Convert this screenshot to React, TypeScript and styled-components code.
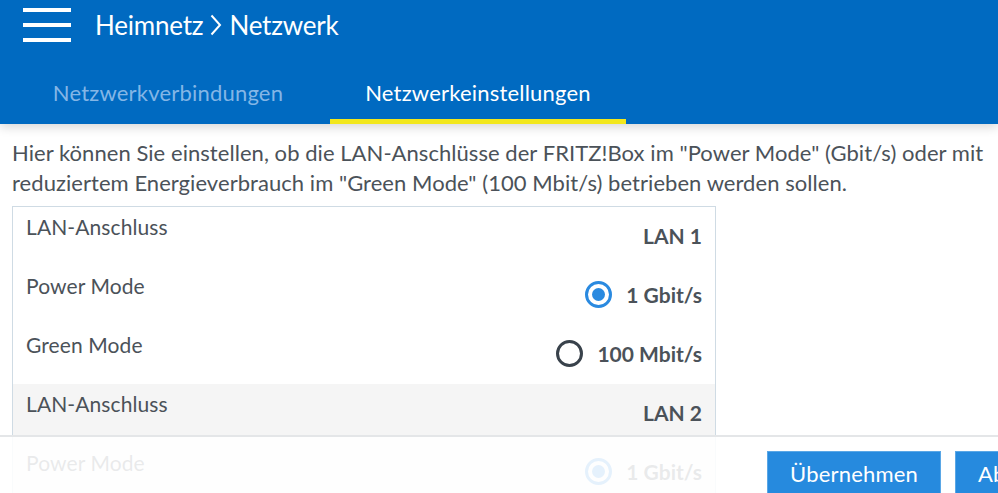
import React from "react";
import styled, { createGlobalStyle } from "styled-components";

const Global = createGlobalStyle`
  html, body { margin: 0; padding: 0; background: #fff; overflow: hidden; }
  body { font-family: Lato, "Liberation Sans", sans-serif; color: #4b5259; }
  * { box-sizing: border-box; }
`;

const Page = styled.div`
  width: 998px;
  height: 493px;
  position: relative;
  overflow: hidden;
  background: #fff;
`;

const Header = styled.header`
  background: #006ac1;
  height: 124px;
  display: flex;
  flex-direction: column;
  box-shadow: 0 3px 10px rgba(0, 0, 0, 0.16);
  position: relative;
  z-index: 1;
`;

const TitleBar = styled.div`
  display: flex;
  align-items: center;
  height: 50px;
  padding-left: 23px;
  gap: 24px;
`;

const Burger = styled.button`
  width: 48px;
  height: 34px;
  padding: 0;
  border: 0;
  background: none;
  display: flex;
  flex-direction: column;
  justify-content: space-between;
  margin-top: -1px;
  span {
    display: block;
    height: 4px;
    background: #fff;
  }
`;

const Title = styled.h1`
  margin: 0;
  font-size: 26px;
  font-weight: 400;
  color: #fff;
  letter-spacing: -0.2px;
  display: flex;
  align-items: center;
  gap: 7px;
`;

const Tabs = styled.nav`
  display: flex;
  gap: 14px;
  padding-left: 20px;
  margin-top: 19px;
`;

const Tab = styled.div<{ $active?: boolean }>`
  width: 296px;
  height: 55px;
  display: flex;
  justify-content: center;
  align-items: flex-start;
  padding-top: 10px;
  font-size: 22px;
  letter-spacing: 0.2px;
  color: ${(p) => (p.$active ? "#ffffff" : "#84b6e6")};
  border-bottom: 5px solid ${(p) => (p.$active ? "#f2e71c" : "transparent")};
`;

const Content = styled.main`
  padding: 14px 12px 0;
`;

const Intro = styled.p`
  margin: 0 0 8px;
  font-size: 22px;
  line-height: 30px;
  letter-spacing: 0.05px;
  color: #4b5259;
`;

const Table = styled.div`
  width: 704px;
  border: 1px solid #cfdbe4;
  border-bottom: 0;
`;

const Row = styled.div<{ $shaded?: boolean }>`
  height: 59px;
  display: flex;
  justify-content: space-between;
  padding: 0 13px;
  background: ${(p) => (p.$shaded ? "#f5f5f5" : "#fff")};
`;

const Label = styled.div`
  font-size: 21px;
  letter-spacing: 0.1px;
  padding-top: 7px;
`;

const Value = styled.div`
  display: flex;
  align-items: center;
  gap: 14px;
  font-size: 21px;
  font-weight: 700;
  padding-top: 17px;
  height: 59px;
  align-self: flex-start;
  & > span { line-height: 1; margin-top: -20px; }
`;

const Radio = styled.span<{ $checked?: boolean }>`
  width: 27px;
  height: 27px;
  border-radius: 50%;
  border: 3px solid ${(p) => (p.$checked ? "#2a8ae0" : "#39424b")};
  display: flex;
  align-items: center;
  justify-content: center;
  margin-top: -22px;
  &::after {
    content: "";
    width: 13px;
    height: 13px;
    border-radius: 50%;
    background: ${(p) => (p.$checked ? "#2a8ae0" : "transparent")};
  }
`;

const Footer = styled.footer`
  position: absolute;
  left: 0;
  right: 0;
  bottom: 0;
  height: 58px;
  background: rgba(255, 255, 255, 0.88);
  border-top: 2px solid #e4e6e8;
  display: flex;
  gap: 14px;
  padding: 14px 0 0 767px;
`;

const Button = styled.button`
  flex: none;
  height: 50px;
  background: #268ade;
  border: 1px solid #5aa7e6;
  color: #fff;
  font-family: inherit;
  font-size: 22px;
  letter-spacing: 0.2px;
  padding: 8px 22px 0;
  display: flex;
  justify-content: center;
  align-items: flex-start;
`;

const ports = [
  { name: "LAN 1", power: true },
  { name: "LAN 2", power: true },
];

export default function App() {
  return (
    <Page>
      <Global />
      <Header>
        <TitleBar>
          <Burger aria-label="Menü">
            <span />
            <span />
            <span />
          </Burger>
          <Title>
            Heimnetz
            <svg width="12" height="22" viewBox="0 0 12 22" aria-hidden>
              <path d="M1.5 1.5 L10 11 L1.5 20.5" fill="none" stroke="#fff" strokeWidth="2" />
            </svg>
            Netzwerk
          </Title>
        </TitleBar>
        <Tabs>
          <Tab>Netzwerkverbindungen</Tab>
          <Tab $active>Netzwerkeinstellungen</Tab>
        </Tabs>
      </Header>
      <Content>
        <Intro>
          Hier können Sie einstellen, ob die LAN-Anschlüsse der FRITZ!Box im "Power Mode" (Gbit/s) oder mit
          reduziertem Energieverbrauch im "Green Mode" (100 Mbit/s) betrieben werden sollen.
        </Intro>
        <Table>
          {ports.map((p, i) => (
            <React.Fragment key={p.name}>
              <Row $shaded={i % 2 === 1}>
                <Label>LAN-Anschluss</Label>
                <Value>
                  <span>{p.name}</span>
                </Value>
              </Row>
              <Row $shaded={i % 2 === 1}>
                <Label>Power Mode</Label>
                <Value>
                  <Radio $checked={p.power} />
                  <span>1 Gbit/s</span>
                </Value>
              </Row>
              <Row $shaded={i % 2 === 1}>
                <Label>Green Mode</Label>
                <Value>
                  <Radio $checked={!p.power} />
                  <span>100 Mbit/s</span>
                </Value>
              </Row>
            </React.Fragment>
          ))}
        </Table>
      </Content>
      <Footer>
        <Button>Übernehmen</Button>
        <Button>Abbrechen</Button>
      </Footer>
    </Page>
  );
}
